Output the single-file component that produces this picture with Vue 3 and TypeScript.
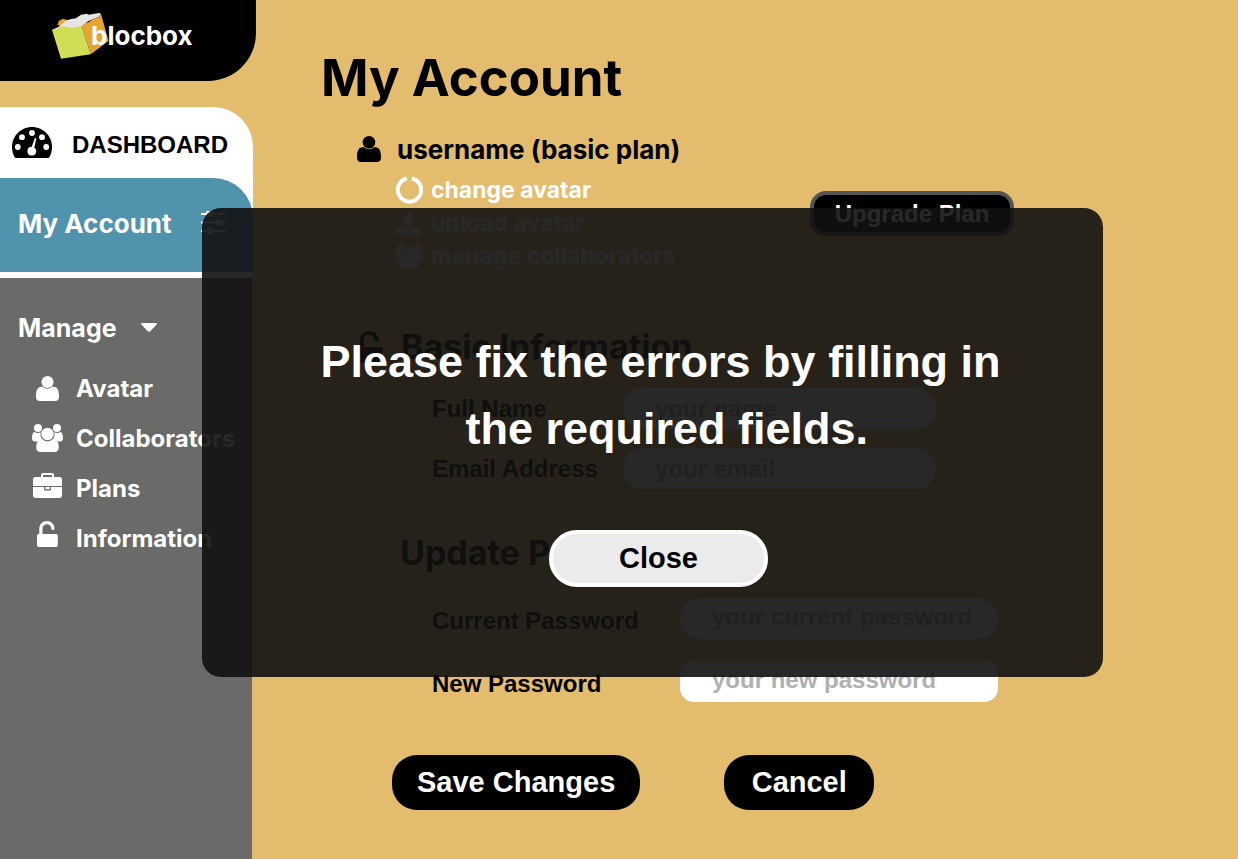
<script setup lang="ts">
import { ref } from 'vue'

type IconName = 'user' | 'users' | 'briefcase' | 'lock'

interface Field {
  id: string
  label: string
  placeholder: string
  type: string
}

const manageItems: { icon: IconName; label: string }[] = [
  { icon: 'user', label: 'Avatar' },
  { icon: 'users', label: 'Collaborators' },
  { icon: 'briefcase', label: 'Plans' },
  { icon: 'lock', label: 'Information' },
]

const basicFields: Field[] = [
  { id: 'full-name', label: 'Full Name', placeholder: 'your name', type: 'text' },
  { id: 'email', label: 'Email Address', placeholder: 'your email', type: 'email' },
]

const passwordFields: Field[] = [
  { id: 'current-password', label: 'Current Password', placeholder: 'your current password', type: 'password' },
  { id: 'new-password', label: 'New Password', placeholder: 'your new password', type: 'password' },
]

const showError = ref(true)
</script>

<template>
  <svg class="sprite" aria-hidden="true">
    <symbol id="user" viewBox="0 0 24 26">
      <circle cx="12" cy="6.300" r="6.300" />
      <path d="M7 11.200A7 7 0 0 0 17 11.200H18.500C22.500 11.200 24 15.500 24 20.500V22c0 2.500-1.500 4-4 4H4c-2.500 0-4-1.500-4-4v-1.500C0 15.500 1.500 11.200 5.500 11.200z" />
    </symbol>
    <symbol id="users" viewBox="0 0 31 28">
      <circle cx="6" cy="4" r="4" />
      <circle cx="25" cy="4" r="4" />
      <circle cx="15.500" cy="10" r="6.200" />
      <path d="M2.500 8C4.500 9.200 6.600 9.200 8.600 8.300c-.4 3 .2 5.400 1.600 7.200-2 0-3.500.7-4.600 1.900H3c-2 0-3-1.200-3-3.200C0 11 .7 8.200 2.500 8z" />
      <path d="M28.500 8c-2 1.200-4.100 1.200-6.100.3.4 3-.2 5.400-1.600 7.200 2 0 3.500.7 4.600 1.900H28c2 0 3-1.200 3-3.200 0-3.200-.7-6-2.500-6.200z" />
      <path d="M10.200 15A7 7 0 0 0 20.800 15c4 0 6 3.500 6 8.200 0 3-1.500 4.800-4.200 4.800H8.400c-2.700 0-4.200-1.800-4.200-4.800 0-4.700 2-8.200 6-8.200z" />
    </symbol>
    <symbol id="briefcase" viewBox="0 0 29 25">
      <path fill-rule="evenodd" d="M8 4V1.800C8 .8 8.800 0 9.800 0h9.400c1 0 1.800.8 1.800 1.800V4h5.500C28 4 29 5 29 6.500V13H0V6.500C0 5 1 4 2.500 4zm2 0h9V2h-9z" />
      <path d="M0 14h11v2c0 1 .6 1.500 1.500 1.500h4c.9 0 1.500-.5 1.500-1.500v-2h11v8.500c0 1.500-1 2.500-2.500 2.500h-24C1 25 0 24 0 22.500z" />
      <path d="M12.300 14h4.400v2.200h-4.400z" />
    </symbol>
    <symbol id="lock" viewBox="0 0 21 26">
      <path d="M2.300 13V7.800C2.300 3.200 5.500 0 9.900 0c4.300 0 7.600 3.200 7.600 7.600 0 .8-.5 1.300-1.300 1.300h-.6c-.8 0-1.300-.5-1.300-1.300 0-2.500-1.800-4.300-4.400-4.300S5.500 5.100 5.500 7.700V13h13.600c1 0 1.700.7 1.700 1.700v9.500c0 1-.7 1.800-1.800 1.800H1.900C.8 26 0 25.200 0 24.200v-9.500C0 13.700.8 13 1.900 13z" />
    </symbol>
  </svg>

  <div class="page">
    <aside class="sidebar">
      <header class="brand">
        <a class="brand-link" href="#">
          <svg class="brand-mark" viewBox="0 0 58 47" aria-hidden="true">
            <path fill="#e5a531" d="M5.500 12l1.200-4L11 5.800l5 1.500-3 6z" />
            <path fill="#e6e6e6" d="M0 16.700l6-2.500 4-3.500 4-3 4-1.500 6-1 5-3.500 5.700-1 2 1L47 0l2 .7-2 3-5 2-6 2.500-6.300 5.500-3 2H19l-4 1-6-1-5 1.500z" />
            <path fill="#e5a531" d="M29.700 12.700l3-2.200 4.300-1.500L41 6l6-2 2-3.300L56.500 28 38.700 41.300z" />
            <path fill="#d0de57" d="M0 16.900l5-.9 3-2.500 5-.3 5 1.600 5-.2 4-1.400 2.700-.5 9 28.600L9 45.800z" />
          </svg>
          <span class="brand-name">blocbox</span>
        </a>
      </header>

      <nav class="nav" aria-label="Main">
        <div class="tabs">
          <a class="tab dashboard" href="#">
            <svg class="gauge" viewBox="0 0 40 31" aria-hidden="true">
              <path d="M20 0c11 0 20 9 20 20 0 4-1 7-2.500 10-.4.700-.9 1-1.600 1H4.100c-.7 0-1.200-.3-1.600-1C1 27 0 24 0 20 0 9 9 0 20 0z" />
              <g fill="#fff">
                <circle cx="5.800" cy="20" r="2.900" />
                <circle cx="10" cy="10.200" r="2.900" />
                <circle cx="20" cy="6" r="2.900" />
                <circle cx="30" cy="10.200" r="2.900" />
                <circle cx="34.200" cy="20" r="2.900" />
                <path d="M22.800 11l1.500.5-2 9.200c1.400.8 2.100 2.200 1.900 3.900a4.400 4.400 0 1 1-4.400-4.900z" />
              </g>
            </svg>
            <span>DASHBOARD</span>
          </a>
          <a class="tab account" href="#" aria-current="page">
            <span>My Account</span>
            <svg class="sliders" viewBox="0 0 25 24" aria-hidden="true">
              <path d="M0 3h25M0 11.500h25M0 20h25" stroke="#fff" stroke-width="2" />
              <path fill="#fff" d="M5 0h6v6H5zM15 8.500h6v6h-6zM6 17h6v6H6z" />
            </svg>
          </a>
        </div>
        <button class="manage" type="button" aria-expanded="true">
          <span>Manage</span>
          <svg class="caret" viewBox="0 0 16 9" aria-hidden="true"><path d="M1 0h14c1 0 1.200.8.600 1.400L9 8.400c-.6.600-1.400.600-2 0L.4 1.400C-.2.800 0 0 1 0z" /></svg>
        </button>
        <ul class="links">
          <li v-for="item in manageItems" :key="item.label">
            <a href="#">
              <span class="link-icon">
                <svg :class="['icon', item.icon]" aria-hidden="true"><use :href="'#' + item.icon" /></svg>
              </span>
              <span>{{ item.label }}</span>
            </a>
          </li>
        </ul>
      </nav>
    </aside>

    <main class="content">
      <h1>My Account</h1>

      <section class="profile">
        <div>
          <p class="username">
            <svg class="icon profile-user" aria-hidden="true"><use href="#user" /></svg>
            <span>username (basic plan)</span>
          </p>
          <ul class="profile-links">
            <li>
              <a href="#">
                <svg class="profile-icon" viewBox="0 0 28 28" aria-hidden="true">
                  <path d="M12 2.500a11.700 11.700 0 1 0 5 0" fill="none" stroke="currentColor" stroke-width="4" />
                </svg>
                <span>change avatar</span>
              </a>
            </li>
            <li>
              <a href="#">
                <svg class="profile-icon" viewBox="0 0 28 28" aria-hidden="true">
                  <path d="M13.500 2.500L21 10.500h-4.500v8h-6v-8H6zM2.500 18.500h6.500c.5 1.700 2 2.500 4.500 2.500s4-.8 4.500-2.500h6.500c.8 0 1.500.7 1.500 1.500v4.500c0 .8-.7 1.500-1.500 1.500h-22c-.8 0-1.500-.7-1.500-1.500V20c0-.8.700-1.500 1.500-1.500z" />
                </svg>
                <span>upload avatar</span>
              </a>
            </li>
            <li>
              <a href="#">
                <svg class="profile-icon" aria-hidden="true"><use href="#users" /></svg>
                <span>manage collaborators</span>
              </a>
            </li>
          </ul>
        </div>
        <button class="upgrade" type="button">Upgrade Plan</button>
      </section>

      <form @submit.prevent="showError = true">
        <section class="group basic">
          <h2>
            <svg class="icon heading-lock" aria-hidden="true"><use href="#lock" /></svg>
            <span>Basic Information</span>
          </h2>
          <div v-for="field in basicFields" :key="field.id" class="field">
            <label :for="field.id">{{ field.label }}</label>
            <input :id="field.id" :type="field.type" :placeholder="field.placeholder" />
          </div>
        </section>

        <section class="group password">
          <h2><span>Update Password</span></h2>
          <div v-for="field in passwordFields" :key="field.id" class="field">
            <label :for="field.id">{{ field.label }}</label>
            <input :id="field.id" :class="field.id" :type="field.type" :placeholder="field.placeholder" />
          </div>
        </section>

        <div class="actions">
          <button class="action" type="submit">Save Changes</button>
          <button class="action" type="button">Cancel</button>
        </div>
      </form>
    </main>

    <div v-if="showError" class="modal" role="alertdialog" aria-labelledby="modal-message">
      <p id="modal-message">Please fix the errors by filling in<br />&nbsp;the required fields.</p>
      <button class="close" type="button" @click="showError = false">Close</button>
    </div>
  </div>
</template>

<style>
body {
  margin: 0;
  background: #e3bc6e;
}
</style>

<style scoped>
* {
  box-sizing: border-box;
}

.sprite {
  position: absolute;
  width: 0;
  height: 0;
}

.page {
  position: relative;
  display: grid;
  grid-template-columns: 256px 1fr;
  min-height: 100vh;
  background: #e3bc6e;
  color: #000;
  font-family: Inter, "Open Sans", sans-serif;
  font-weight: 700;
}

a {
  color: inherit;
  text-decoration: none;
}

button,
input {
  font-family: "Liberation Sans", Arial, sans-serif;
  font-weight: 700;
}

button {
  cursor: pointer;
}

ul {
  margin: 0;
  padding: 0;
  list-style: none;
}

svg {
  display: block;
  flex: none;
  fill: currentColor;
}

.sidebar {
  display: flex;
  flex-direction: column;
}

.brand {
  height: 81px;
  padding: 13px 0 0 52px;
  border-bottom-right-radius: 48px;
  background: #000;
  color: #fff;
}

.brand-link {
  position: relative;
  display: block;
}

.brand-mark {
  width: 58px;
  height: 47px;
}

.brand-name {
  position: absolute;
  top: 8px;
  left: 39px;
  font-size: 26px;
  line-height: 30px;
}

.nav {
  display: flex;
  flex: 1;
  flex-direction: column;
  width: 252px;
  margin-top: 26px;
}

.tabs {
  width: 253px;
  padding-bottom: 6px;
  border-top-right-radius: 40px;
  background: #fff;
}

.tab {
  display: flex;
  align-items: center;
}

.dashboard {
  height: 71px;
  padding: 4px 0 0 12px;
  gap: 20px;
  font-family: "Liberation Sans", Arial, sans-serif;
  font-size: 24px;
}

.gauge {
  width: 40px;
  height: 31px;
  margin-bottom: 4px;
}

.account {
  justify-content: space-between;
  height: 94px;
  padding: 0 27px 4px 18px;
  border-top-right-radius: 40px;
  background: #4f93ad;
  color: #fff;
  font-size: 26px;
}

.sliders {
  width: 25px;
  height: 24px;
}

.manage {
  display: flex;
  align-items: center;
  height: 85px;
  padding: 14px 0 0 18px;
  gap: 24px;
  border: 0;
  background: #6a6a68;
  color: #fff;
  font-family: inherit;
  font-size: 25px;
}

.caret {
  width: 16px;
  height: 9px;
}

.links {
  flex: 1;
  background: #6a6a68;
  color: #fff;
  font-size: 24px;
}

.links a {
  display: flex;
  align-items: center;
  height: 50px;
  padding-left: 32px;
  gap: 13px;
}

.link-icon {
  display: flex;
  flex: none;
  justify-content: center;
  width: 31px;
}

.icon.user {
  width: 23px;
  height: 25px;
}

.icon.users {
  width: 31px;
  height: 28px;
}

.icon.briefcase {
  width: 29px;
  height: 25px;
  margin-bottom: 6px;
}

.icon.lock {
  width: 21px;
  height: 26px;
  margin-bottom: 8px;
}

.content {
  padding: 48px 24px 24px 65px;
}

h1 {
  margin: 0;
  font-size: 51px;
  line-height: 60px;
}

.profile {
  display: grid;
  grid-template-columns: 453px 204px;
  align-items: start;
  padding: 25px 0 0 36px;
}

.username {
  display: flex;
  align-items: center;
  height: 32px;
  margin: 0 0 8px;
  gap: 16px;
  font-size: 26px;
}

.profile-user {
  width: 24px;
  height: 26px;
}

.profile-links {
  padding-left: 38px;
  color: #fff;
  font-size: 23px;
}

.profile-links a {
  display: flex;
  align-items: center;
  height: 33px;
  gap: 8px;
}

.profile-icon {
  width: 28px;
  height: 28px;
}

.upgrade {
  height: 45px;
  margin-top: 58px;
  padding: 0;
  border: 4px solid #555;
  border-radius: 16px;
  background: #000;
  color: #fff;
  font-size: 24px;
}

.group {
  padding-left: 36px;
}

.basic {
  padding-top: 55px;
}

.password {
  padding-top: 44px;
}

h2 {
  display: flex;
  align-items: center;
  margin: 0 0 21px;
  padding-left: 43px;
  font-size: 34px;
  line-height: 40px;
}

.basic h2 {
  padding-left: 0;
  gap: 18px;
}

.password h2 {
  margin-bottom: 25px;
}

.heading-lock {
  width: 26px;
  height: 32px;
}

.field {
  display: grid;
  grid-template-columns: 191px 313px;
  align-items: center;
  padding-left: 75px;
}

.field + .field {
  margin-top: 19px;
}

.password .field {
  grid-template-columns: 248px 318px;
}

.password .field + .field {
  margin-top: 22px;
}

label {
  font-family: "Liberation Sans", Arial, sans-serif;
  font-size: 24px;
}

.password label {
  padding-top: 4px;
}

input {
  width: 100%;
  height: 41px;
  padding: 0 8px 0 32px;
  border: 0;
  border-radius: 21px;
  background: #fff;
  color: #000;
  font-size: 24px;
}

.password input {
  padding-bottom: 3px;
}

input::placeholder {
  color: #b0b0b0;
  opacity: 1;
}

input.new-password {
  border-radius: 14px;
}

.actions {
  display: flex;
  padding: 53px 0 0 71px;
  gap: 84px;
}

.action {
  min-width: 150px;
  height: 55px;
  padding: 0 25px;
  border: 0;
  border-radius: 25px;
  background: #000;
  color: #fff;
  font-size: 29px;
}

.modal {
  position: absolute;
  top: 208px;
  right: 135px;
  left: 202px;
  display: flex;
  flex-direction: column;
  align-items: center;
  min-height: 469px;
  padding: 120px 0 90px 12px;
  border-radius: 19px;
  background: rgba(17, 17, 17, 0.9);
  color: #fff;
}

.modal p {
  margin: 0 0 68px;
  padding-left: 4px;
  font-family: "Liberation Sans", Arial, sans-serif;
  font-size: 45px;
  line-height: 67px;
  text-align: center;
}

.close {
  width: 219px;
  height: 57px;
  border: 4px solid #fff;
  border-radius: 28px;
  background: #ebebeb;
  color: #000;
  font-size: 29px;
}
</style>
